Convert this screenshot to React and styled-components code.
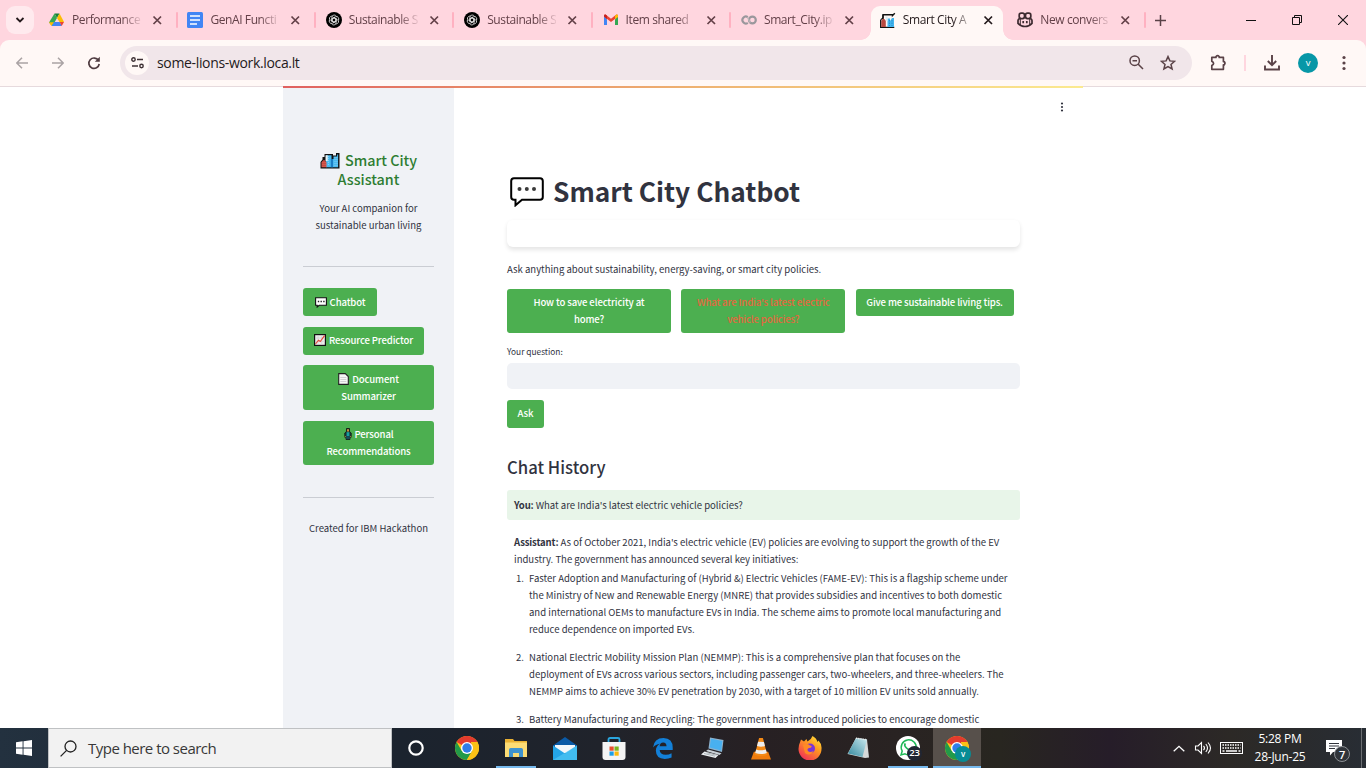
import React from "react";
import styled, { createGlobalStyle, css } from "styled-components";

const Global = createGlobalStyle`
  *, *::before, *::after { box-sizing: border-box; }
  html, body { margin: 0; padding: 0; width: 1366px; height: 768px; overflow: hidden; background: #fff; }
  svg { display: block; flex: none; }
  button { font: inherit; border: 0; padding: 0; background: none; color: inherit; }
  b { letter-spacing: -0.15px; }
`;

const ui = `"Open Sans", "Noto Sans", sans-serif`;
const source = `"Noto Sans CJK SC", "Noto Sans", sans-serif`;

const Screen = styled.div`
  width: 1366px; height: 768px; display: flex; flex-direction: column; overflow: hidden;
  font-family: ${ui};
`;

/* Browser tab strip */
const TabStrip = styled.header`
  height: 40px; flex: none; background: #ffd6df; display: flex; padding-left: 6px;
`;
const TabSearch = styled.button`
  width: 28px; height: 28px; margin: 6px 5px 0 0; border-radius: 9px; background: #ffeaee;
  display: grid; place-items: center; flex: none;
`;
const Tab = styled.div`
  width: 138.4px; flex: none; height: 34px; margin-top: 6px; padding-left: 10px;
  display: flex; align-items: center; position: relative; padding-bottom: 6px;
  color: ${(p) => (p.$active ? "#241a1c" : "#634048")};
  ${(p) =>
    p.$active
      ? css`
          background: #fff8f6; border-radius: 9px 9px 0 0; width: 132.5px; margin-left: 1.5px; margin-right: 4px; padding-left: 9px;
          &::before, &::after {
            content: ""; position: absolute; bottom: 0; width: 10px; height: 10px;
          }
          &::before { left: -10px; background: radial-gradient(circle at 0 0, transparent 9.5px, #fff8f6 10px); }
          &::after { right: -10px; background: radial-gradient(circle at 100% 0, transparent 9.5px, #fff8f6 10px); }
        `
      : ""}
`;
const TabTitle = styled.span`
  width: 69px; margin-left: 7px; margin-right: 11px; white-space: nowrap; font-size: 12px; line-height: 18px; flex: none;
  letter-spacing: -0.4px;
  mask-image: linear-gradient(90deg, #000 72%, transparent 104%);
`;
const Separator = styled.i`
  width: 2px; height: 16px; background: #ffb1c1; border-radius: 1px; margin-left: 12.5px; flex: none;
`;
const NewTab = styled.button`
  width: 30px; height: 28px; margin-top: 6px; display: grid; place-items: center;
`;
const WindowControls = styled.div`
  margin-left: auto; display: flex; height: 40px;
`;
const WindowButton = styled.button`
  width: 46px; height: 40px; display: grid; place-items: center;
`;

/* Toolbar */
const ToolbarBack = styled.div`
  height: 47px; flex: none; background: #ffd6df;
`;
const Toolbar = styled.nav`
  height: 47px; background: #fff8f6; border-radius: 9px 9px 0 0; border-bottom: 1px solid #e6dadd;
  display: flex; align-items: center; padding: 0 0 1px 4px; color: #5a4247;
`;
const ToolButton = styled.button`
  width: ${(p) => p.$w || 36}px; height: 34px; display: grid; place-items: center; flex: none;
`;
const AddressBar = styled.div`
  width: 1072px; height: 34px; margin-left: 8px; border-radius: 17px; background: #f1e6ea; display: flex; align-items: center;
  padding-left: 5px; padding-right: 8px;
`;
const SiteInfo = styled.span`
  width: 24px; height: 24px; border-radius: 50%; background: #fff8f6; display: grid; place-items: center;
`;
const Url = styled.span`
  margin-left: 8px; font-size: 14px; line-height: 20px; color: #241a1c; letter-spacing: -0.34px; flex: 1;
`;
const ToolSeparator = styled.i`
  width: 2px; height: 16px; background: #ffd6df; margin: 0 8px 0 -1px;
`;
const Avatar = styled.span`
  width: 20px; height: 20px; border-radius: 50%; background: #0797a7; color: #fff; font-size: 9.5px; line-height: 19px; text-align: center;
`;

/* Web page */
const Page = styled.div`
  flex: 1; min-height: 0; display: flex; justify-content: center; background: #fff; font-family: ${source}; color: #31333f;
`;
const AppFrame = styled.div`
  width: 800px; height: 642px; margin-top: -1px; display: flex; flex-direction: column; overflow: hidden; z-index: 1;
`;
const Decoration = styled.div`
  height: 2px; flex: none; background: linear-gradient(90deg, #e0605f, #eeb070 50%, #fbea90); z-index: 1;
`;
const Columns = styled.div`
  display: flex; flex: 1; min-height: 0;
`;
const Sidebar = styled.aside`
  width: 171px; flex: none; background: #f0f2f6; padding: 61.5px 20px 0; display: flex; flex-direction: column; align-items: flex-start;
`;
const Brand = styled.h2`
  margin: 0; width: 100%; text-align: center; color: #2e7d32; font-size: 14.35px; line-height: 19.2px; font-weight: 500; white-space: nowrap;
  svg { display: inline-block; vertical-align: -3px; margin-right: 5px; }
`;
const SideText = styled.p`
  margin: ${(p) => p.$top}px 0 0; width: 100%; text-align: center; font-size: 9.55px; line-height: 17px; white-space: nowrap;
`;
const Rule = styled.hr`
  width: 100%; height: 1px; border: 0; background: #cacdd3; margin: ${(p) => p.$top}px 0 ${(p) => p.$bottom}px;
`;
const GreenButton = styled.button`
  background: #4caf50; color: ${(p) => (p.$hot ? "#e2683f" : "#fff")}; border-radius: 3px;
  width: ${(p) => p.$w}px; height: ${(p) => p.$h || 28}px; margin-bottom: ${(p) => p.$gap || 0}px;
  padding: ${(p) => p.$drop || 0}px 0 ${(p) => p.$lift || 0}px;
  font-size: 9.55px; line-height: 17px; font-weight: 500; letter-spacing: -0.12px; text-align: center; white-space: nowrap; flex: none;
  svg { display: inline-block; vertical-align: -2px; margin-right: 3px; }
`;
const Main = styled.main`
  flex: 1; padding: 0 63px 0 53px; display: flex; flex-direction: column; min-width: 0;
`;
const Kebab = styled.div`
  height: 38px; display: flex; justify-content: flex-end; padding-top: 13px; margin-right: -44.5px; flex: none;
`;
const Title = styled.h1`
  margin: 43px 0 0; height: 44px; display: flex; align-items: center; font-size: 26.3px; line-height: 44px; font-weight: 700;
  white-space: nowrap; flex: none;
  svg { margin: 1px 9px 0 3px; }
`;
const Card = styled.div`
  height: 27px; margin-top: 7px; border-radius: 6px; background: #fff; box-shadow: 0 2.7px 4px rgba(0, 0, 0, 0.1); flex: none;
`;
const Lead = styled.p`
  margin: 14px 0 11px; font-size: 9.55px; line-height: 17px; white-space: nowrap;
`;
const Prompts = styled.div`
  display: flex; align-items: flex-start; gap: 10.3px; height: 44px; flex: none;
`;
const Label = styled.label`
  margin-top: 10px; font-size: 8.35px; line-height: 16px; margin-bottom: 4px;
`;
const Field = styled.div`
  height: 26px; border-radius: 5px; background: #f0f2f6; margin-bottom: 11px; flex: none;
`;
const SectionTitle = styled.h3`
  margin: 26px 0 10px; font-size: 16.7px; line-height: 26px; font-weight: 500;
`;
const UserMessage = styled.div`
  height: 30px; border-radius: 3px; background: #e8f5e9; padding: 7px 7px 0; font-size: 9.55px; line-height: 17px; margin-bottom: 14px; flex: none;
`;
const Answer = styled.div`
  padding-left: 7px; font-size: 9.55px; line-height: 17px; white-space: nowrap;
`;
const Line = styled.span`
  display: block;
`;
const AnswerList = styled.ol`
  margin: 2px 0 0; padding: 0; list-style: none;
`;
const AnswerItem = styled.li`
  display: flex; margin-bottom: 11px;
`;
const Marker = styled.span`
  width: 13px; margin-left: 2px; flex: none;
`;

/* Taskbar */
const Taskbar = styled.footer`
  height: 40px; flex: none; display: flex; color: #fff;
  background: linear-gradient(90deg, #23313f 0, #1b232e 400px, #20232b 600px, #272023 760px, #292322 900px, #282620 1000px, #261d29 1110px, #2c2926 1230px, #282d34 1366px);
`;
const Start = styled.button`
  width: 48px; height: 40px; display: grid; place-items: center;
`;
const SearchBox = styled.div`
  width: 344px; height: 40px; background: #f2f2f2; border: 1px solid #bfc1c3; color: #383838; display: flex; align-items: center;
  padding-left: 11px; font-size: 15px; letter-spacing: -0.52px;
  svg { margin-right: 11px; }
`;
const TaskItem = styled.button`
  width: 48px; height: 40px; display: grid; place-items: center; flex: none; margin-right: 1px; position: relative;
  background: ${(p) => (p.$active ? "#57504b" : "transparent")};
  &::after {
    content: ""; position: absolute; bottom: 0; height: 2px; background: #76b9ed;
    left: ${(p) => (p.$active ? 0 : 4)}px; right: ${(p) => (p.$active ? 0 : 4)}px;
    display: ${(p) => (p.$open || p.$active ? "block" : "none")};
  }
`;
const Cortana = styled(TaskItem)`
  margin-right: 3px;
`;
const Badge = styled.span`
  position: absolute; left: ${(p) => p.$x}px; top: ${(p) => p.$y}px; width: ${(p) => p.$d}px; height: ${(p) => p.$d}px;
  border-radius: 50%; background: ${(p) => p.$bg}; font-size: ${(p) => p.$fs}px; line-height: ${(p) => p.$d - 1}px; text-align: center;
  letter-spacing: -0.3px; border: ${(p) => p.$border || "0"}; font-weight: ${(p) => p.$fw || 400};
`;
const Tray = styled.div`
  margin-left: auto; display: flex; align-items: center; height: 40px;
`;
const Clock = styled.div`
  width: 64px; text-align: center; font-size: 12px; line-height: 18px; letter-spacing: -0.25px; margin-left: 5px; padding-top: 0;
`;
const Notice = styled.div`
  width: 49px; height: 40px; padding: 12px 0 0 14px; position: relative;
`;
const Edge = styled.i`
  width: 1px; height: 40px; background: #6b6e72; margin-right: 4px;
`;

const Svg = ({ w, h = w, vb, children }) => (
  <svg width={w} height={h} viewBox={vb || `0 0 ${w} ${h}`} fill="none">{children}</svg>
);

const Close = () => (
  <Svg w={11}><path d="M1.5 1.5 9 9M9 1.5 1.5 9" stroke="currentColor" strokeWidth="1.7" /></Svg>
);
const DriveIcon = () => (
  <Svg w={16}>
    <path d="M5.5 1.5h5L8 6z" fill="#188038" />
    <path d="M5.5 1.5 8 6l-4.5 8L0 10.5z" fill="#34a853" />
    <path d="M10.5 1.5 15 10H10.5L8 6z" fill="#fbbc04" />
    <path d="M5 10h5.7l2.2 4H2.3z" fill="#4285f4" />
    <path d="M10.700 10H15l-2.300 4z" fill="#ea4335" />
    <path d="M0 10.200h5L2.300 14z" fill="#fbbc04" />
  </Svg>
);
const DocsIcon = () => (
  <Svg w={16}><rect width="16" height="16" rx="1.5" fill="#4285f4" /><path d="M3 4h10M3 8h10M3 12h7" stroke="#fff" strokeWidth="1.6" /></Svg>
);
const KnotIcon = () => (
  <Svg w={16}>
    <circle cx="8" cy="8" r="8" fill="#000" />
    <g stroke="#ddd" strokeWidth=".85">
      {[0, 60, 120, 180, 240, 300].map((a) => (
        <path key={a} transform={`rotate(${a} 8 8)`} d="M6 8.9V5.3Q6 3 8.1 3 9.5 3 10.4 4.2M6 6.9l2-1.2 3 1.7" />
      ))}
    </g>
  </Svg>
);
const GmailIcon = () => (
  <Svg w={16}>
    <path d="M1 4v9h3V7.2z" fill="#4285f4" /><path d="M12 7.2V13h3V4z" fill="#34a853" />
    <path d="M1 4.6V4q0-1.6 1.6-1.4L8 6.8l5.4-4.2Q15 2.4 15 4v.8L8 10z" fill="#ea4335" />
    <path d="M12 3.7 13.4 2.6Q15 2.4 15 4v1L12 7.2z" fill="#fbbc04" /><path d="M1 4.6 4 7.2V3.7L2.6 2.6Q1 2.4 1 4z" fill="#c5221f" />
  </Svg>
);
const ColabIcon = () => (
  <Svg w={16}>
    <path d="M6.8 5.2A3.4 3.4 0 1 0 6.8 10.8" stroke="#9a979c" strokeWidth="2.2" />
    <circle cx="11.4" cy="8" r="3.4" stroke="#9a979c" strokeWidth="2.2" />
    <path d="M6.5 5.2 9.2 10.6" stroke="#b9b4b8" strokeWidth="1.4" />
  </Svg>
);
const CityIcon = ({ w = 16, h = 16 }) => (
  <Svg w={w} h={h} vb="0 0 20 17">
    <path d="M.5 10 2.500 7.500V5h2V2h8.500V3.500h3V1h3.500v15.500H.5z" fill="#111" />
    <path d="M6 3.300h5.500V7h2V4.600h3.600V2.500h1V15.300H6z" fill="#4bbaf0" />
    <path d="M5.500 3.300h2.200V9H5.500z" fill="#e9f2f5" />
    <path d="M1.500 10.500q2.500-5 5 0v4.800h-5z" fill="#d8564a" />
    <path d="M10.800 7h2.200v8.300h-2.200z" fill="#1c7ec4" />
    <path d="M8.500 4v10M15 5v9M17 5v9" stroke="#8bd7fa" strokeWidth=".8" strokeDasharray="1 1" />
    <path d="M3 9v6M5 9v6" stroke="#9c3530" strokeWidth=".6" strokeDasharray="1 1" />
  </Svg>
);
const CityTabIcon = () => (
  <Svg w={16}>
    <path d="M1.200 7.500 3 6V2.800h9.500V3.500L14.800 1.300" stroke="#111" strokeWidth="1.400" />
    <path d="M3 3v4M.700 7.500v8h13.600" stroke="#111" strokeWidth="1.300" />
    <path d="M7.5 6.500h2.500V9l2-3h2v9H7.500z" fill="#43b5ee" />
    <path d="M5.500 4.500h2V9h-2z" fill="#dcebf0" />
    <path d="M1.300 9q2.200-4.500 4.500 0v5.900H1.300z" fill="#b84940" />
    <path d="M9.500 8v6M12 8v6" stroke="#1d83c4" strokeWidth=".8" strokeDasharray="1.5 1" />
  </Svg>
);
const CopilotIcon = () => (
  <Svg w={16}>
    <g stroke="#3d2a30" strokeWidth="1.7">
      <rect x="2.2" y="1.2" width="5.3" height="5.4" rx="2" /><rect x="8.5" y="1.2" width="5.3" height="5.4" rx="2" />
      <path d="M2.6 6.4Q1 7.3 1 8.5v2.8Q4 14.5 8 14.5t7-3.2V8.5Q15 7.3 13.4 6.4" />
      <path d="M3.3 7v5.8M12.7 7v5.8" strokeWidth="1" />
      <path d="M6.2 9v2.3M9.8 9v2.3" />
    </g>
  </Svg>
);
const SpeechIcon = ({ w, h }) => (
  <Svg w={w} h={h} vb="0 0 34 30">
    <path d="M4 1.2h26q2.8 0 2.8 2.8v16q0 2.8-2.8 2.8H12L5.5 28.3v-5.5H4Q1.2 22.8 1.2 20V4Q1.2 1.2 4 1.2z" fill="#fff" stroke="#000" strokeWidth="2" />
    <circle cx="9.5" cy="12" r="2" fill="#3a3a3a" /><circle cx="16.8" cy="12" r="2" fill="#3a3a3a" /><circle cx="24" cy="12" r="2" fill="#3a3a3a" />
  </Svg>
);
const SmallSpeech = () => (
  <Svg w={12} h={11}>
    <path d="M.6.7h10.8v7.6H4.2L2.2 10V8.3H.6z" fill="#fff" stroke="#111" strokeWidth="1.1" />
    <path d="M2.8 4.5h6.8" stroke="#222" strokeWidth="1.3" strokeDasharray="1.4 1.3" />
  </Svg>
);
const ChartIcon = () => (
  <Svg w={12}>
    <rect x=".6" y=".6" width="10.8" height="10.8" fill="#eee" stroke="#111" strokeWidth="1.2" />
    <path d="M1 4h10M1 7.3h10M4 1v10M7.7 1v10" stroke="#ccc" strokeWidth=".6" />
    <path d="m1.5 10 3-3.8 1.8 1.3L10.5 1.7" stroke="#e5493a" strokeWidth="1.2" />
  </Svg>
);
const PageIcon = () => (
  <Svg w={11} h={12}>
    <path d="M.7.6h6.6l3 3v7.8H.7z" fill="#f7f7f7" stroke="#222" strokeWidth="1.1" />
    <path d="M2.3 4.5h6M2.3 6.5h6M2.3 8.5h6" stroke="#c9c5cc" strokeWidth=".8" />
  </Svg>
);
const PersonIcon = () => (
  <Svg w={8} h={12}>
    <path d="M2.500.5h3v3L7.200 5v4.200H6V11.500H2V9.200H.8V5l1.700-1.500z" fill="#173a3a" stroke="#111" strokeWidth=".8" />
    <path d="M3 1.200h2v2.200H3z" fill="#c98c3a" /><path d="M2.600 4.200h2.800V8H2.600z" fill="#16a0a0" /><path d="M3 8.200v3M5 8.200v3" stroke="#18607a" />
    <path d="M1.3 8.2v.9M6.7 8.2v.9" stroke="#d39b43" />
  </Svg>
);
const ChromeIcon = () => (
  <Svg w={24}>
    <circle cx="12" cy="12" r="12" fill="#fbc116" />
    <path d="M12 12 1.6 6A12 12 0 0 1 22.4 6z" fill="#e33b2e" />
    <path d="M1.6 6A12 12 0 0 0 11.8 24l5.4-9L12 12 6.8 15z" fill="#229a49" />
    <path d="M22.4 6A12 12 0 0 1 11.8 24l5.5-9.2Q18.8 11 16 7V6z" fill="#fbc116" />
    <circle cx="12" cy="12" r="6" fill="#fff" /><circle cx="12" cy="12" r="4.7" fill="#2f7de9" />
  </Svg>
);
const ExplorerIcon = () => (
  <Svg w={22} h={20}>
    <path d="M0 1h8l1.5 2H22v16H0z" fill="#e9b133" /><path d="M0 4.5h22V19H0z" fill="#fcdc75" />
    <path d="M4 19v-7.2Q4 10 5.8 10h10.4Q18 10 18 11.8V19h-4v-4H8v4z" fill="#3f93cf" />
  </Svg>
);
const MailIcon = () => (
  <Svg w={24} h={23}>
    <path d="M0 8.5 12 0l12 8.5V13H0z" fill="#0b5aa6" /><path d="M2 8h20v8H2z" fill="#f3f7fa" />
    <path d="M0 8.5V23h24V8.5l-12 8z" fill="#24a5e8" /><path d="M0 23 24 8.5V23z" fill="#51c7f5" opacity=".65" />
  </Svg>
);
const StoreIcon = () => (
  <Svg w={24} h={23}>
    <path d="M6.5 5V2.4Q6.5 1 8 1h8q1.5 0 1.5 1.4V5" stroke="#2aa5dd" strokeWidth="1.8" />
    <path d="M.5 5h23v15q0 3-3 3h-17q-3 0-3-3z" fill="#f4f4f4" />
    <path d="M7.5 9.5h4.2v4.2H7.5z" fill="#e84e2d" /><path d="M12.5 9.5h4.2v4.2h-4.2z" fill="#7ab51d" />
    <path d="M7.5 14.5h4.2v4.2H7.5z" fill="#1d9fe6" /><path d="M12.5 14.5h4.2v4.2h-4.2z" fill="#fab90b" />
  </Svg>
);
const EdgeIcon = () => (
  <Svg w={20} h={21} vb="0 0 21 22">
    <path d="M0 10Q1.2 0 11 0q9.7.3 9.7 10.2v2.3H7q.3 5 6.3 5 3.5 0 6.2-1.6v4.6Q16.500 22 12.300 22 3 21.600 3 13.200q0-4.900 4.300-7.300Q2.800 6.300 0 10zm7-1.300h7.200q0-4-3.500-4T7 8.700z" fill="#1380d8" />
  </Svg>
);
const LaptopIcon = () => (
  <Svg w={23} h={22} vb="0 0 23 22">
    <path d="M9 .5 22.500 3 21 15 7.500 11.500z" fill="#8db2ce" /><path d="M10 1.700 21.300 3.900 20.200 13.500 8.700 10.600z" fill="#48b0f0" />
    <path d="m7 12.500 13.500 3.700-2 1.800L5 14z" fill="#c9d0d6" />
    <path d="m3.500 14.500 14 3.500-3 3L0 17.500z" fill="#edf0f2" />
    <path d="m3 16.500 11 2.700M5.500 15.700l10 2.500" stroke="#9aa3aa" strokeWidth=".8" />
  </Svg>
);
const VlcIcon = () => (
  <Svg w={20} h={23} vb="0 0 21 23">
    <path d="M3 15h15l3 8H0z" fill="#f07c0c" /><path d="M8.500.6h4L17 18q-6.500 3-13 0z" fill="#f48a16" />
    <path d="m7.400 4.500 6.200.1 1 4.200q-4 1.500-8.300 0zM5.400 12.500q5 1.800 10.200 0l1 3.600q-6 2.200-12.200 0z" fill="#eee" />
  </Svg>
);
const FirefoxIcon = () => (
  <Svg w={24}>
    <defs><linearGradient id="ff" x1=".9" y1="0" x2=".2" y2="1"><stop stopColor="#ffe63d" /><stop offset=".4" stopColor="#ff9a20" /><stop offset="1" stopColor="#f02b59" /></linearGradient></defs>
    <path d="M1 9 3 3.500l3 2L8.500 3l1 2.500Q13 4 14.500 0q4 2 5 6l1-1.500Q24 8 23.500 13A11.500 11.500 0 0 1 .5 13z" fill="url(#ff)" />
    <circle cx="12" cy="12.500" r="5" fill="#7a35d6" /><path d="M5 9q4-2 7 .5 3 .6.600 2.300-3.600 0-3 2.600 2 3 6 .6Q12 21 7 17z" fill="#ff8a24" />
  </Svg>
);
const NotepadIcon = () => (
  <Svg w={24} h={22}>
    <defs><linearGradient id="np" x1="0" y1="1" x2="1" y2="0"><stop stopColor="#32889d" /><stop offset="1" stopColor="#cbeaf0" /></linearGradient></defs>
    <path d="M9 1 20 2.500l2 18L18 21 .5 17z" fill="#d6d9d9" /><path d="M9 1 20 2.500 15.500 20 1 16.500z" fill="url(#np)" />
    <path d="M9 1.200 20 2.700" stroke="#eee" strokeWidth="1.500" strokeDasharray="1.200 1" />
  </Svg>
);
const WhatsAppIcon = () => (
  <Svg w={24}>
    <circle cx="12" cy="12" r="12" fill="#fff" />
    <path d="m5 19 1.200-4A7.500 7.500 0 1 1 9 17.800z" stroke="#20b858" strokeWidth="1.500" />
    <path d="M9.500 7.500q-2 1.500 1 4.500t4.500 1.500" stroke="#20b858" strokeWidth="1.700" />
  </Svg>
);

const TABS = [
  ["Performance", DriveIcon], ["GenAI Functi", DocsIcon], ["Sustainable S", KnotIcon], ["Sustainable S", KnotIcon],
  ["Item shared", GmailIcon], ["Smart_City.ip", ColabIcon], ["Smart City A", CityTabIcon, true], ["New convers", CopilotIcon],
];

const APPS = [
  [ChromeIcon], [ExplorerIcon, true], [MailIcon], [StoreIcon], [EdgeIcon], [LaptopIcon], [VlcIcon], [FirefoxIcon], [NotepadIcon],
];

const ITEMS = [
  [
    "Faster Adoption and Manufacturing of (Hybrid &) Electric Vehicles (FAME-EV): This is a flagship scheme under",
    "the Ministry of New and Renewable Energy (MNRE) that provides subsidies and incentives to both domestic",
    "and international OEMs to manufacture EVs in India. The scheme aims to promote local manufacturing and",
    "reduce dependence on imported EVs.",
  ],
  [
    "National Electric Mobility Mission Plan (NEMMP): This is a comprehensive plan that focuses on the",
    "deployment of EVs across various sectors, including passenger cars, two-wheelers, and three-wheelers. The",
    "NEMMP aims to achieve 30% EV penetration by 2030, with a target of 10 million EV units sold annually.",
  ],
  ["Battery Manufacturing and Recycling: The government has introduced policies to encourage domestic"],
];

export default function App() {
  return (
    <Screen>
      <Global />
      <TabStrip>
        <TabSearch><Svg w={10} h={8}><path d="m1.500 2 3.500 3.500L8.500 2" stroke="#241a1c" strokeWidth="1.800" /></Svg></TabSearch>
        {TABS.map(([title, Icon, active], i) => (
          <Tab key={i} $active={active}>
            <Icon /><TabTitle>{title}</TabTitle><Close />
            {i !== 5 && !active && <Separator />}
          </Tab>
        ))}
        <NewTab><Svg w={11}><path d="M5.500 0v11M0 5.500h11" stroke="#5a4247" strokeWidth="1.500" /></Svg></NewTab>
        <WindowControls>
          <WindowButton><Svg w={10}><path d="M0 5.500h10" stroke="#111" /></Svg></WindowButton>
          <WindowButton><Svg w={10}><path d="M.5 2.500h7v7h-7zM2.500 2.500v-2h7v7h-2" stroke="#111" /></Svg></WindowButton>
          <WindowButton><Svg w={10}><path d="m0 0 10 10M10 0 0 10" stroke="#111" strokeWidth="1.100" /></Svg></WindowButton>
        </WindowControls>
      </TabStrip>
      <ToolbarBack>
        <Toolbar>
          <ToolButton><Svg w={12}><path d="M12 6H1M6 .7.8 6 6 11.300" stroke="#aaa3a4" strokeWidth="1.500" /></Svg></ToolButton>
          <ToolButton><Svg w={12}><path d="M0 6h11M6 .7 11.200 6 6 11.300" stroke="#aaa3a4" strokeWidth="1.500" /></Svg></ToolButton>
          <ToolButton>
            <Svg w={14}><path d="M11.500 4.500A5.200 5.200 0 1 0 12.200 8" stroke="#4f3b40" strokeWidth="1.700" /><path d="M12.800.8v5H7.800z" fill="#4f3b40" /></Svg>
          </ToolButton>
          <AddressBar>
            <SiteInfo>
              <Svg w={13} h={12}><circle cx="2.500" cy="2.500" r="1.700" stroke="#3d3034" strokeWidth="1.400" /><path d="M6 2.500h6M1 9h6" stroke="#3d3034" strokeWidth="1.600" /><circle cx="10.500" cy="9" r="1.700" stroke="#3d3034" strokeWidth="1.400" /></Svg>
            </SiteInfo>
            <Url>some-lions-work.loca.lt</Url>
            <ToolButton $w={32}>
              <Svg w={15}><circle cx="5.700" cy="5.700" r="4.700" stroke="#5a4247" strokeWidth="1.500" /><path d="m9 9 5 5M3.500 5.700H8" stroke="#5a4247" strokeWidth="1.500" /></Svg>
            </ToolButton>
            <ToolButton $w={32}>
              <Svg w={16}><path d="m8 1.600 1.900 4.300 4.700.4-3.600 3.100 1.100 4.600L8 11.600 3.900 14 5 9.400 1.400 6.300l4.700-.4z" stroke="#5a4247" strokeWidth="1.500" /></Svg>
            </ToolButton>
          </AddressBar>
          <ToolButton $w={53}>
            <Svg w={17}><path d="M1.800 3.400H6V2.500q1.600-1.600 3.200 0v.9h4.200v4.200h.8q1.500 1.600 0 3.200h-.8v4.500H1.800v-3.900q3.600-2 0-4.100z" stroke="#5a4247" strokeWidth="1.700" strokeLinejoin="round" /></Svg>
          </ToolButton>
          <ToolSeparator />
          <ToolButton>
            <Svg w={16} h={17}><path d="M8 1v10M3.800 7 8 11.200 12.200 7M1 11.500V15.500h14v-4" stroke="#5a4247" strokeWidth="1.900" /></Svg>
          </ToolButton>
          <ToolButton><Avatar>v</Avatar></ToolButton>
          <ToolButton>
            <Svg w={4} h={16}><circle cx="2" cy="2.500" r="1.600" fill="#5a4247" /><circle cx="2" cy="8" r="1.600" fill="#5a4247" /><circle cx="2" cy="13.500" r="1.600" fill="#5a4247" /></Svg>
          </ToolButton>
        </Toolbar>
      </ToolbarBack>

      <Page>
        <AppFrame>
          <Decoration />
          <Columns>
            <Sidebar>
              <Brand><CityIcon w={20} h={17} />Smart City<br />Assistant</Brand>
              <SideText $top={12}>Your AI companion for<br />sustainable urban living</SideText>
              <Rule $top={32} $bottom={21} />
              <GreenButton $w={74} $gap={11} $drop={1}><SmallSpeech />Chatbot</GreenButton>
              <GreenButton $w={121} $gap={10.5}><ChartIcon />Resource Predictor</GreenButton>
              <GreenButton $w={131} $h={44.5} $gap={11}><PageIcon />Document<br />Summarizer</GreenButton>
              <GreenButton $w={131} $h={44.5}><PersonIcon />Personal<br />Recommendations</GreenButton>
              <Rule $top={31.5} $bottom={0} />
              <SideText $top={22}>Created for IBM Hackathon</SideText>
            </Sidebar>
            <Main>
              <Kebab>
                <Svg w={6} h={12}><circle cx="3" cy="2.500" r="1.100" fill="#31333f" /><circle cx="3" cy="6" r="1.100" fill="#31333f" /><circle cx="3" cy="9.500" r="1.100" fill="#31333f" /></Svg>
              </Kebab>
              <Title><SpeechIcon w={34} h={30} />Smart City Chatbot</Title>
              <Card />
              <Lead>Ask anything about sustainability, energy-saving, or smart city policies.</Lead>
              <Prompts>
                <GreenButton $w={164} $h={44}>How to save electricity at<br />home?</GreenButton>
                <GreenButton $w={164} $h={44} $hot>What are India's latest electric<br />vehicle policies?</GreenButton>
                <GreenButton $w={158} $h={27}>Give me sustainable living tips.</GreenButton>
              </Prompts>
              <Label>Your question:</Label>
              <Field />
              <GreenButton $w={37} $lift={1}>Ask</GreenButton>
              <SectionTitle>Chat History</SectionTitle>
              <UserMessage><b>You:</b> What are India's latest electric vehicle policies?</UserMessage>
              <Answer>
                <Line><b>Assistant:</b> As of October 2021, India's electric vehicle (EV) policies are evolving to support the growth of the EV</Line>
                <Line>industry. The government has announced several key initiatives:</Line>
                <AnswerList>
                  {ITEMS.map((lines, i) => (
                    <AnswerItem key={i}>
                      <Marker>{i + 1}.</Marker>
                      <div>{lines.map((l) => <Line key={l}>{l}</Line>)}</div>
                    </AnswerItem>
                  ))}
                </AnswerList>
              </Answer>
            </Main>
          </Columns>
        </AppFrame>
      </Page>

      <Taskbar>
        <Start><Svg w={16}><path d="M0 2.300 6.600 1.300v6.300H0zM7.500 1.200 16 0v7.600H7.500zM0 8.400h6.600v6.300L0 13.700zM7.500 8.400H16V16l-8.500-1.200z" fill="#fff" /></Svg></Start>
        <SearchBox>
          <Svg w={17}><circle cx="10.500" cy="6.500" r="5.500" stroke="#222" strokeWidth="1.300" /><path d="M6.600 10.400.6 16.400" stroke="#222" strokeWidth="1.300" /></Svg>
          Type here to search
        </SearchBox>
        <Cortana><Svg w={16}><circle cx="8" cy="8" r="6.700" stroke="#fff" strokeWidth="2.200" /></Svg></Cortana>
        {APPS.map(([Icon, open], i) => <TaskItem key={i} $open={open}><Icon /></TaskItem>)}
        <TaskItem $open><WhatsAppIcon /><Badge $x={23} $y={18} $d={15} $bg="#202632" $fs={9.5} $fw={600}>23</Badge></TaskItem>
        <TaskItem $active><ChromeIcon /><Badge $x={22} $y={18} $d={16} $bg="#078c95" $fs={8} $fw={600}>v</Badge></TaskItem>
        <Tray>
          <Svg w={12} h={7}><path d="m.7 6.300 5.300-5 5.300 5" stroke="#fff" strokeWidth="1.300" /></Svg>
          <Svg w={35} h={16}><path d="M10.500 6h2.500l3.500-3.500v11L13 10h-2.500zM18.500 5.800q2 2.200 0 4.400M20.800 4q3.400 4 0 8M23 2.500q5 5.500 0 11" stroke="#fff" strokeWidth="1.100" /></Svg>
          <Svg w={23} h={12}><rect x=".5" y=".5" width="22" height="11" stroke="#fff" /><path d="M2.500 3h18M2.500 6h18" stroke="#fff" strokeWidth="1.400" strokeDasharray="1.500 1" /><path d="M2.500 9h2M6 9h11M18.500 9h2" stroke="#fff" strokeWidth="1.300" /></Svg>
          <Clock>5:28 PM<br />28-Jun-25</Clock>
          <Notice>
            <Svg w={16} h={16}><path d="M0 0h16v12H7l-3 3.500V12H0z" fill="#fff" /><path d="M3 3.500h10M3 6h10M3 8.500h6" stroke="#31333a" /></Svg>
            <Badge $x={22} $y={18} $d={16} $bg="#30343a" $fs={11} $fw={600} $border="1px solid #8d9094">7</Badge>
          </Notice>
          <Edge />
        </Tray>
      </Taskbar>
    </Screen>
  );
}
